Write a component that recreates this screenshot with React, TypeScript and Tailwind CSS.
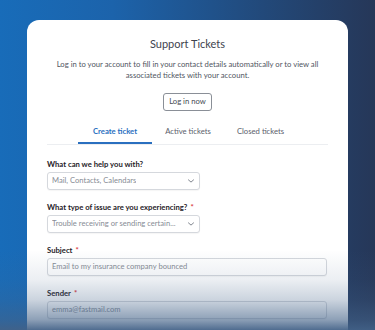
import React from "react";

function Chevron() {
  return (
    <svg width="8" height="8" viewBox="0 0 10 10" fill="none" className="shrink-0">
      <path d="M1.8 3.6 L5 6.4 L8.2 3.6" stroke="#6f757f" strokeWidth="1.1" strokeLinecap="round" strokeLinejoin="round" />
    </svg>
  );
}

function Label({ text, required }: { text: string; required?: boolean }) {
  return (
    <div className="text-[7.7px] leading-[10px] font-bold text-[#1f2228]">
      {text}
      {required && <span className="text-[#d9363e] ml-[3px]">*</span>}
    </div>
  );
}

function Select({ value }: { value: string }) {
  return (
    <div className="mt-[3px] w-[153px] h-[18px] border border-[#d5d8dd] rounded-[3px] bg-white flex items-center justify-between pl-[4px] pr-[4px] shadow-[0_1px_1px_rgba(0,0,0,0.04)]">
      <span className="text-[7.6px] text-[#878c95] truncate">{value}</span>
      <Chevron />
    </div>
  );
}

function Input({ value }: { value: string }) {
  return (
    <div className="mt-[3px] w-[280px] h-[18px] border border-[#d5d8dd] rounded-[3px] bg-white flex items-center pl-[4px] shadow-[0_1px_1px_rgba(0,0,0,0.04)]">
      <span className="text-[7.6px] text-[#878c95]">{value}</span>
    </div>
  );
}

export default function App() {
  return (
    <div
      className="relative w-[375px] h-[330px] overflow-hidden bg-[linear-gradient(90deg,#186cb9_0%,#1c63ab_30%,#22497a_70%,#263758_100%)]"
      style={{ fontFamily: "Lato, 'Open Sans', sans-serif" }}
    >
      <div className="pt-[20px] pl-[27px]">
        <div className="w-[321px] h-[340px] bg-white rounded-t-[12px] px-[20px] pt-[17px]">
          <div className="text-center text-[11px] leading-[14px] text-[#3e434e]">Support Tickets</div>
          <div className="mt-[8px] text-center text-[7.7px] leading-[11px] text-[#51565f] px-[4px]">
            Log in to your account to fill in your contact details automatically or to view all associated tickets with your account.
          </div>
          <div className="mt-[12px] flex justify-center">
            <div className="h-[18px] px-[5px] border border-[#8a8f97] rounded-[3px] flex items-center text-[7.7px] text-[#464b54]">
              Log in now
            </div>
          </div>
          <div className="mt-[11px] border-b border-[#eceef1] flex justify-center">
            <div className="w-[74px] h-[22px] flex items-center justify-center text-[7.7px] font-bold text-[#2a6fbf] border-b-2 border-[#2a6fbf] -mb-px">
              Create ticket
            </div>
            <div className="w-[72px] h-[22px] flex items-center justify-center pb-[2px] text-[7.7px] text-[#5b606b]">Active tickets</div>
            <div className="w-[73px] h-[22px] flex items-center justify-center pb-[2px] text-[7.7px] text-[#5b606b]">Closed tickets</div>
          </div>
          <div className="mt-[14px]">
            <Label text="What can we help you with?" />
            <Select value="Mail, Contacts, Calendars" />
          </div>
          <div className="mt-[12px]">
            <Label text="What type of issue are you experiencing?" required />
            <Select value="Trouble receiving or sending certain..." />
          </div>
          <div className="mt-[12px]">
            <Label text="Subject" required />
            <Input value="Email to my insurance company bounced" />
          </div>
          <div className="mt-[12px]">
            <Label text="Sender" required />
            <Input value="emma@fastmail.com" />
          </div>
        </div>
      </div>
      <div className="absolute left-0 right-0 bottom-0 h-[80px] bg-[linear-gradient(180deg,rgba(66,97,135,0)_0%,rgba(66,97,135,0.1)_37%,rgba(66,97,135,0.27)_62%,rgba(66,97,135,0.6)_87%,rgba(66,97,135,0.93)_100%)]" />
    </div>
  );
}
